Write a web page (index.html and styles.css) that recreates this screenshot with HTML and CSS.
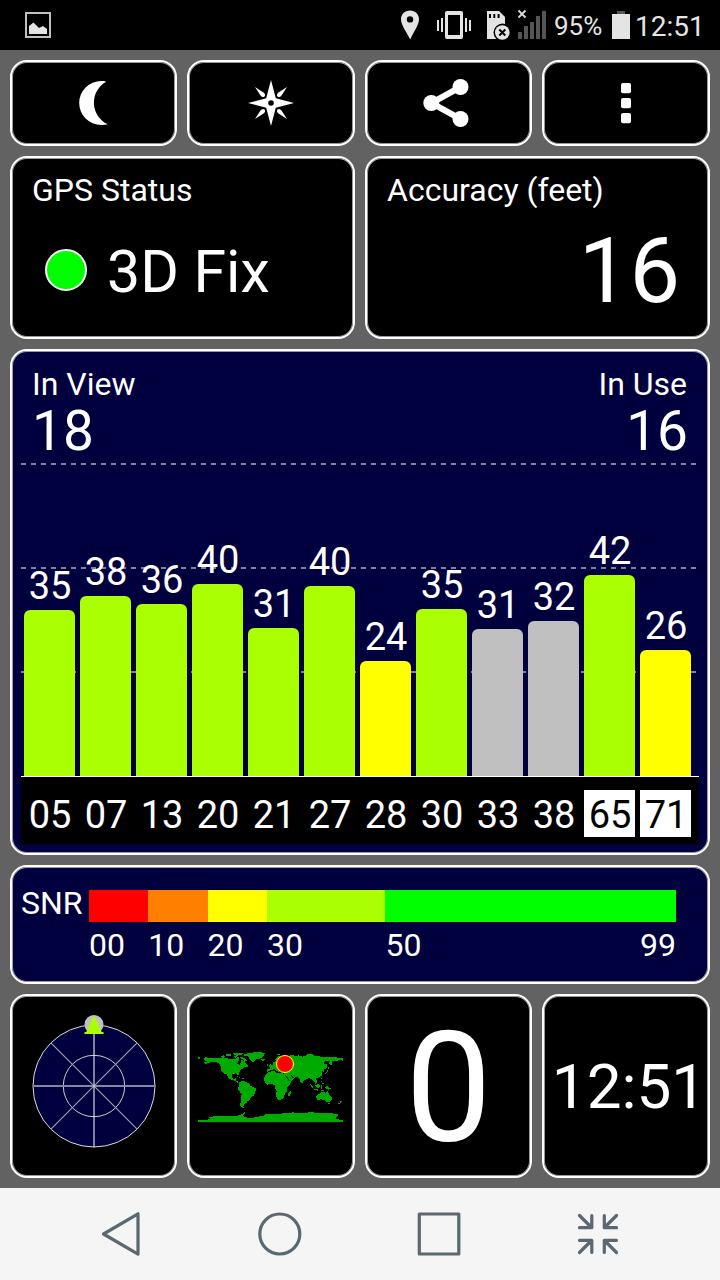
FILE: index.html
```html
<!DOCTYPE html>
<html lang="en">
<head>
    <meta charset="UTF-8">
    <meta name="viewport" content="width=device-width, initial-scale=1.0">
    <title>GPS Test</title>
    <link rel="stylesheet" href="styles.css">
</head>
<body>
    <header class="status-bar">
        <svg class="picture" width="28" height="50" viewBox="0 0 28 50">
            <rect x="2" y="13" width="24" height="24" fill="none" stroke="#c0c0c0" stroke-width="2"/>
            <path d="M5 34V26L9.500 22.500L15 28L19 26L23 29V34Z" fill="#e4e4e4"/>
        </svg>
        <div class="status-icons">
            <svg class="pin" width="20" height="50" viewBox="0 0 20 50">
                <path fill-rule="evenodd" d="M10 10.500C4.800 10.500 1 14.400 1 19.300C1 25 6.500 32 10.200 39.500C13.500 32 19 25 19 19.300C19 14.400 15.200 10.500 10 10.500ZM10 16.200A3.200 3.200 0 1 1 10 22.600A3.200 3.200 0 1 1 10 16.200Z"/>
            </svg>
            <svg class="vibrate" width="38" height="50" viewBox="0 0 38 50">
                <path fill-rule="evenodd" d="M12 11H26Q28 11 28 13V37Q28 39 26 39H12Q10 39 10 37V13Q10 11 12 11ZM13 15V35H25V15Z"/>
                <path d="M2 20h2v11h-2zM6 18h2v14h-2zM30 18h2v14h-2zM34 20h2v11h-2z"/>
            </svg>
            <svg class="sd" width="26" height="50" viewBox="0 0 26 50">
                <path d="M1 11H13L19 17V39H1Z"/>
                <path d="M3 14h2v4h-2zM7.300 14h2v4h-2zM11.600 14h2v4h-2z" fill="#000"/>
                <circle cx="16.500" cy="32.500" r="9" fill="#000"/>
                <circle cx="16.300" cy="32.500" r="7.300"/>
                <path d="M13.300 29.500l6 6M19.300 29.500l-6 6" stroke="#000" stroke-width="2"/>
            </svg>
            <svg class="signal" width="32" height="50" viewBox="0 0 32 50">
                <path d="M2 32h4v7h-4zM8 26h4v13h-4zM14 22h4v17h-4zM20 16h4v23h-4zM26 11h4v28h-4z" fill="#555"/>
                <path d="M2.500 10.500l7 7M9.500 10.500l-7 7" stroke="#ddd" stroke-width="1.800"/>
            </svg>
            <span class="percent">95%</span>
            <svg class="battery" width="20" height="50" viewBox="0 0 20 50">
                <path d="M6 11h8v3h-8z" fill="#555"/>
                <path d="M1 14h18v25h-18z"/>
            </svg>
            <span class="clock">12:51</span>
        </div>
    </header>

    <main class="dashboard">
        <button class="panel tool">
            <svg width="56" height="56" viewBox="-28 -28 56 56">
                <path d="M12.200 -21.300C10 -22 8.600 -22 7.200 -22A22 22 0 0 0 7.200 22C9.500 22.200 11.500 22 13.600 21.300A24 24 0 0 1 12.200 -21.300Z"/>
            </svg>
        </button>
        <button class="panel tool">
            <svg width="56" height="56" viewBox="-28 -28 56 56">
                <path fill-rule="evenodd" d="M0 -23L4.800 -4.800L23 0L4.800 4.800L0 23L-4.800 4.800L-23 0L-4.800 -4.800ZM0 -2.800A2.800 2.800 0 1 0 0 2.800A2.800 2.800 0 1 0 0 -2.800Z"/>
                <path d="M-16 -16L-7.500 -10.500Q-5 -8.500 -6.500 -6.500Q-8.500 -5 -10.500 -7.500Z"/>
                <path d="M16 -16L7.500 -10.500Q5 -8.500 6.500 -6.500Q8.500 -5 10.500 -7.500Z"/>
                <path d="M-16 16L-7.500 10.500Q-5 8.500 -6.500 6.500Q-8.500 5 -10.500 7.500Z"/>
                <path d="M16 16L7.500 10.500Q5 8.500 6.500 6.500Q8.500 5 10.500 7.500Z"/>
            </svg>
        </button>
        <button class="panel tool">
            <svg width="56" height="56" viewBox="-28 -28 56 56">
                <path d="M11.500 -16L-17.700 0L11.500 16" fill="none" stroke="#fff" stroke-width="6"/>
                <circle cx="-17.700" cy="0" r="8"/>
                <circle cx="11.500" cy="-16" r="8"/>
                <circle cx="11.500" cy="16" r="8"/>
            </svg>
        </button>
        <button class="panel tool">
            <svg width="56" height="56" viewBox="-28 -28 56 56">
                <rect x="-5" y="-20" width="10" height="10.300" rx="2"/>
                <rect x="-5" y="-5" width="10" height="10.300" rx="2"/>
                <rect x="-5" y="10" width="10" height="10.300" rx="2"/>
            </svg>
        </button>

        <section class="panel half">
            <div class="label">GPS Status</div>
            <div class="fix"><span class="dot"></span>3D Fix</div>
        </section>
        <section class="panel half">
            <div class="label">Accuracy (feet)</div>
            <div class="accuracy">16</div>
        </section>

        <section class="panel full navy satellites">
            <div class="counts">
                <div><div class="label">In View</div><div class="count">18</div></div>
                <div class="right"><div class="label">In Use</div><div class="count">16</div></div>
            </div>
            <div class="plot">
                <div class="col"><span>35</span><div class="bar" style="height: 166px"></div></div>
                <div class="col"><span>38</span><div class="bar" style="height: 180px"></div></div>
                <div class="col"><span>36</span><div class="bar" style="height: 172px"></div></div>
                <div class="col"><span>40</span><div class="bar" style="height: 192px"></div></div>
                <div class="col"><span>31</span><div class="bar" style="height: 148px"></div></div>
                <div class="col"><span>40</span><div class="bar" style="height: 190px"></div></div>
                <div class="col"><span>24</span><div class="bar low" style="height: 115px"></div></div>
                <div class="col"><span>35</span><div class="bar" style="height: 167px"></div></div>
                <div class="col"><span>31</span><div class="bar unused" style="height: 147px"></div></div>
                <div class="col"><span>32</span><div class="bar unused" style="height: 155px"></div></div>
                <div class="col"><span>42</span><div class="bar" style="height: 201px"></div></div>
                <div class="col"><span>26</span><div class="bar low" style="height: 126px"></div></div>
            </div>
            <div class="ids">
                <span>05</span><span>07</span><span>13</span><span>20</span><span>21</span><span>27</span>
                <span>28</span><span>30</span><span>33</span><span>38</span><span class="glonass">65</span><span class="glonass">71</span>
            </div>
        </section>

        <section class="panel full navy snr">
            <div class="snr-title">SNR</div>
            <div class="scale">
                <div class="w10"><i class="red"></i>00</div>
                <div class="w10"><i class="orange"></i>10</div>
                <div class="w10"><i class="yellow"></i>20</div>
                <div class="w20"><i class="lime"></i>30</div>
                <div class="w49"><i class="green"></i><span>50</span><span>99</span></div>
            </div>
        </section>

        <section class="panel tile">
            <svg width="160" height="160" viewBox="0 0 160 160">
                <circle cx="80" cy="80" r="61" fill="#00003e" stroke="#ddd"/>
                <circle cx="80" cy="80" r="30.700" fill="none" stroke="#ccc"/>
                <path d="M36.900 36.900L123.100 123.100M123.100 36.900L36.900 123.100" stroke="#9c9cb4" stroke-width="1.200"/>
                <path d="M19 80H141" stroke="#85859f" stroke-width="2"/>
                <path d="M80 19V141" stroke="#fff"/>
                <circle cx="80" cy="18.500" r="9.500" fill="#c0c0c0"/>
                <path d="M80 9L87.700 26H89.500V28H70.500V26H72.300Z" fill="#aaff00"/>
            </svg>
        </section>
        <section class="panel tile">
            <svg width="160" height="80" viewBox="18 48 480 240">
                <g fill="#00aa00" shape-rendering="crispEdges">
                    <!-- antarctica -->
                    <path d="M39 270H65L80 264H72V261L90 259L120 257L150 258L165 255L172 251L184 244L178 252L172 256L180 262L200 264L218 260L236 257L240 252L262 252L285 251L305 249L325 247L345 250L362 249L375 246L400 249L425 249L450 251L462 254L454 262L452 267L474 270V276H39Z"/>
                    <!-- north america -->
                    <path d="M39 82H45V87H39ZM56 86L62 82L78 84L105 85L120 84L140 88L152 87L160 80L163 90L158 95L157 101L164 104L168 97L169 91L180 92L182 100L188 105L191 111L180 111L174 116L168 119L163 127L160 138L154 130L143 132L140 141L146 148L151 144L155 144L151 150L158 153L161 160L155 156L143 150L131 145L126 134L117 131L108 121L108 110L102 99L88 95L78 96L64 102L56 98L66 95L60 92Z"/>
                    <path d="M107 78L118 76L122 82L112 83ZM120 74L136 72L138 77L124 79ZM143 71L156 68H176L169 74L158 77L148 76ZM145 79L158 79L150 84ZM162 80L174 82L184 88L186 94L178 94L172 88ZM156 139L168 142L162 143ZM170 144L179 146L172 148Z"/>
                    <!-- greenland -->
                    <path d="M176 73L190 69L208 67L226 66L239 70L235 79L228 85L214 88L204 96L198 93L193 85L189 79L178 78Z"/>
                    <path d="M229 88L238 87L240 91L232 93Z"/>
                    <!-- south america -->
                    <path d="M161 158L170 153L183 155L193 162L197 168L215 176L210 187L207 197L199 201L194 210L187 214L183 220L178 221L175 230L177 234L169 232L165 226L168 211L170 192L161 181L159 174L163 168Z"/>
                    <!-- africa -->
                    <path d="M245 130L258 124L270 124L273 129L284 129L299 131L304 142L311 152L320 151L316 161L305 174L306 185L299 193L295 204L287 210L278 209L273 196L275 184L270 174L269 166L261 162L247 164L239 156L237 146L240 136Z"/>
                    <path d="M316 183L319 187L314 198L309 197L310 188Z"/>
                    <!-- europe and asia -->
                    <path d="M247 116L256 116L253 109L263 104L265 96L273 93L270 89L278 80L288 77H320L330 79L340 76L352 80L362 77L374 72L390 78L410 80L440 81L474 84V93L462 89L454 94L442 94L440 104L434 107L433 98L438 92L422 94L415 100L427 104L424 115L417 117L417 125L410 123L411 136L402 143L392 146L397 156L391 161L386 153L378 147L370 144L366 148L358 149L352 159L347 156L343 144L334 141L329 144L321 153L311 156L302 145L297 131L285 127L276 124L268 117L258 120L249 125H245Z"/>
                    <path d="M252 96L256 101L260 108L251 108L255 103ZM245 102L250 101L249 107H245ZM273 72L288 71L280 76ZM313 80L317 76L330 74L320 80ZM366 73L383 73V79H366ZM427 120L431 120L425 130L417 133L424 126ZM429 107L432 116L428 119ZM408 144L412 143L410 149Z"/>
                    <!-- islands and australia -->
                    <path d="M374 159L383 168L387 176L379 171ZM388 177L402 179L399 182L388 179ZM391 166L402 160L405 167L401 174L394 172ZM407 166L416 167L410 170L411 176L407 175ZM407 150L412 153L410 158ZM413 157L418 163L411 162ZM419 170L429 169L439 177L429 179L421 174ZM408 181L419 180L411 184Z"/>
                    <path d="M395 195L404 192L411 186L418 184L420 189L428 184L433 194L441 202L439 211L433 217L424 215L418 210L408 208L397 211L394 202ZM430 220L436 219L433 224ZM467 211L471 216L464 219ZM459 221L465 218L462 225Z"/>
                </g>
                <path d="M302 137L313 152M318 135L325 144M283 121L296 127L298 116" fill="none" stroke="#000" stroke-width="3"/>
                <circle cx="300" cy="102" r="25.500" fill="#f00" stroke="#ff0" stroke-width="3"/>
            </svg>
        </section>
        <section class="panel tile speed">0</section>
        <section class="panel tile time">12:51</section>
    </main>

    <nav class="nav-bar">
        <svg width="48" height="48" viewBox="0 0 48 48"><path d="M5.500 24L40 3.800V44.200Z"/></svg>
        <svg width="48" height="48" viewBox="0 0 48 48"><circle cx="22.800" cy="24" r="20"/></svg>
        <svg width="48" height="48" viewBox="0 0 48 48"><rect x="3.300" y="4" width="39.500" height="40"/></svg>
        <svg width="48" height="48" viewBox="0 0 48 48"><path d="M4.500 5.500L16.500 17.500M16.800 5.500V17.700H4.500M41.500 5.500L29.500 17.500M29.300 5.500V17.700H41.500M4.500 42.500L16.500 30.500M16.800 42.500V30.300H4.500M41.500 42.500L29.500 30.500M29.300 42.500V30.300H41.500"/></svg>
    </nav>
</body>
</html>
```
FILE: styles.css
```css
* {
    box-sizing: border-box;
}
body {
    margin: 0;
    width: 720px;
    height: 1280px;
    display: flex;
    flex-direction: column;
    background-color: #626262;
    color: #fff;
    font-family: Roboto, sans-serif;
    overflow: hidden;
}
svg {
    display: block;
    flex: none;
}

/* Top status bar */
.status-bar {
    display: flex;
    justify-content: space-between;
    height: 50px;
    padding-left: 24px;
    background-color: #000;
    color: #e4e4e4;
}
.status-icons {
    display: flex;
    width: 320px;
    line-height: 53px;
    fill: #e4e4e4;
}
.vibrate {
    margin-left: 15px;
}
.sd {
    margin-left: 13px;
}
.signal {
    margin-left: 4px;
}
.percent {
    width: 63px;
    padding-left: 6px;
    font-size: 26px;
}
.clock {
    padding-left: 4px;
    font-size: 28px;
}

/* Panels */
.dashboard {
    display: grid;
    grid-template-columns: 167px 168px 167px 168px;
    grid-template-rows: 86px 183px 506px 119px 184px;
    gap: 10px;
    padding: 10px;
    height: 1138px;
}
.panel {
    border: 2px solid #fff;
    border-radius: 17px;
    box-shadow: inset 0 0 0 1px rgba(255, 255, 255, 0.6);
    background-color: #000;
    color: #fff;
    min-width: 0;
}
.navy {
    background-color: #00003e;
}
.half {
    grid-column: span 2;
    padding: 16px 28px 0 20px;
}
.full {
    grid-column: span 4;
    padding: 1px 9px;
}
.tool,
.tile {
    display: flex;
    align-items: center;
    justify-content: center;
    padding: 0;
    fill: #fff;
}
.label {
    font-size: 32px;
    line-height: 32px;
}
.fix {
    display: flex;
    align-items: center;
    gap: 20px;
    margin: 36px 0 0 13px;
    font-size: 59px;
    line-height: 60px;
}
.dot {
    width: 42px;
    height: 42px;
    margin-top: -4px;
    border: 2px solid #fff;
    border-radius: 50%;
    background-color: #0f0;
}
.accuracy {
    margin-top: 21px;
    font-size: 90px;
    line-height: 90px;
    text-align: right;
}

/* Satellite chart */
.counts {
    display: flex;
    justify-content: space-between;
    height: 111px;
    padding: 16px 12px 0 11px;
}
.count {
    margin-top: 4px;
    font-size: 55px;
    line-height: 55px;
}
.right {
    text-align: right;
}
.right .count {
    margin-right: -1px;
}
.plot {
    --dash: repeating-linear-gradient(90deg, #8080a0 0 5px, transparent 5px 10px);
    display: grid;
    grid-template-columns: repeat(12, 51px);
    column-gap: 5px;
    align-items: end;
    height: 314px;
    padding-left: 3px;
    border-bottom: 1px solid #fff;
    background: var(--dash) 0 0 / 100% 2px no-repeat,
                var(--dash) 0 104px / 100% 2px no-repeat,
                var(--dash) 0 208px / 100% 2px no-repeat;
}
.col {
    font-size: 38px;
    line-height: 38px;
    text-align: center;
}
.col span {
    display: block;
    margin-bottom: 5px;
    padding-left: 1px;
}
.bar {
    border-radius: 6px 6px 0 0;
    background-color: #aaff00;
}
.bar.low {
    background-color: #ff0;
}
.bar.unused {
    background-color: #c0c0c0;
}
.ids {
    display: grid;
    grid-template-columns: repeat(12, 51px);
    column-gap: 5px;
    height: 67px;
    padding: 13px 0 0 3px;
    background-color: #000;
    font-size: 38px;
    line-height: 51px;
    text-align: center;
}
.ids span {
    height: 47px;
    padding-left: 1px;
}
.glonass {
    background-color: #fff;
    color: #000;
}

/* SNR legend */
.snr {
    display: flex;
    padding-top: 23px;
    font-size: 32px;
}
.snr-title {
    width: 68px;
    line-height: 27px;
}
.scale {
    display: flex;
    width: 587px;
    line-height: 46px;
}
.scale i {
    display: block;
    height: 32px;
}
.w10 {
    flex: 10 0 0;
}
.w20 {
    flex: 20 0 0;
}
.w49 {
    flex: 49 0 0;
    display: flex;
    flex-wrap: wrap;
    align-content: flex-start;
    justify-content: space-between;
}
.w49 i {
    width: 100%;
}
.red {
    background-color: #f00;
}
.orange {
    background-color: #ff8000;
}
.yellow {
    background-color: #ff0;
}
.lime {
    background-color: #aaff00;
}
.green {
    background-color: #0f0;
}

.speed {
    padding-top: 4px;
    font-size: 154px;
}
.time {
    padding-left: 6px;
    font-size: 62px;
}

/* Bottom navigation */
.nav-bar {
    display: grid;
    grid-template-columns: repeat(4, 159px);
    place-items: center;
    height: 92px;
    padding: 0 42px;
    background-color: #f5f5f5;
    fill: none;
    stroke: #5b6870;
    stroke-width: 3.2;
    stroke-linecap: round;
    stroke-linejoin: round;
}
```
